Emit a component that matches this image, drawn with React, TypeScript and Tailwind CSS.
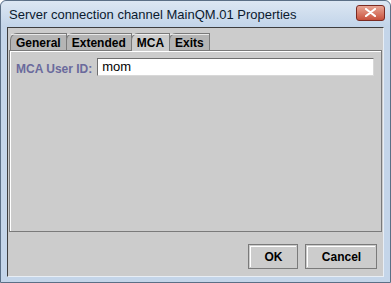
const font = { fontFamily: '"Liberation Sans", Arial, sans-serif' };

const tabs = ["General", "Extended", "MCA", "Exits"];

function Tab({ label, active }: { label: string; active: boolean }) {
  return (
    <div
      className={
        "relative flex items-center h-[17px] px-[5px] -mr-px border border-b-0 border-[#7a7a7a] rounded-tl-[7px] text-[12px] font-bold text-black " +
        (active ? "bg-[#cccccc] h-[18px] z-10 -mb-px" : "bg-[#b5b5b5]")
      }
    >
      <div className="absolute inset-x-0 top-0 h-px bg-white/70 rounded-tl-[7px]" />
      <span className="relative leading-none pt-px">{label}</span>
    </div>
  );
}

function Button({ label, width }: { label: string; width: string }) {
  return (
    <div className={"h-[25px] border border-[#7a7a7a] bg-[#cccccc] p-px " + width}>
      <div className="h-full border-l border-t border-white flex items-center justify-center text-[12px] font-bold text-black">
        {label}
      </div>
    </div>
  );
}

export default function App() {
  return (
    <div className="w-[391px] h-[283px] bg-[#c4d5e9] border border-[#5b6f86] rounded-t-[6px] flex flex-col" style={font}>
      <div className="h-[26px] flex items-center justify-between pl-[8px] pr-[5px] bg-gradient-to-b from-[#dce7f3] to-[#c2d4e9] rounded-t-[6px]">
        <span className="text-[13px] text-[#0b1a2e] pt-[1px]">
          Server connection channel MainQM.01 Properties
        </span>
        <div className="w-[29px] h-[16px] mb-[3px] rounded-[3px] border border-[#7b2a22] bg-gradient-to-b from-[#e8a595] to-[#c7503c] flex items-center justify-center">
          <svg width="11" height="9" viewBox="0 0 11 9">
            <path d="M1 1 L10 8 M10 1 L1 8" stroke="#ffffff" strokeWidth="2.2" strokeLinecap="round" />
          </svg>
        </div>
      </div>
      <div className="flex-1 mx-[6px] mb-[5px] border border-[#3d3d3d] border-r-[#e8eef5] border-b-[#e8eef5] bg-[#cccccc] flex flex-col">
        <div className="flex pl-[2px] pt-[5px]">
          {tabs.map((t) => (
            <Tab key={t} label={t} active={t === "MCA"} />
          ))}
        </div>
        <div className="ml-px mr-[1px] h-[182px] border border-[#7a7a7a]">
          <div className="h-full border-l border-t border-white pt-[6px] pl-[5px] pr-[7px] flex items-start gap-[5px]">
            <span className="text-[12px] font-bold text-[#6a6a9c] pt-[2px]">MCA User ID:</span>
            <div className="flex-1 h-[18px] border border-[#6f6f6f] border-r-[#d8d8d8] border-b-[#d8d8d8] bg-white flex items-center pl-[4px] text-[13px] text-black">
              mom
            </div>
          </div>
        </div>
        <div className="flex justify-end gap-[7px] pr-[6px] pt-[12px]">
          <Button label="OK" width="w-[50px]" />
          <Button label="Cancel" width="w-[72px]" />
        </div>
      </div>
    </div>
  );
}
